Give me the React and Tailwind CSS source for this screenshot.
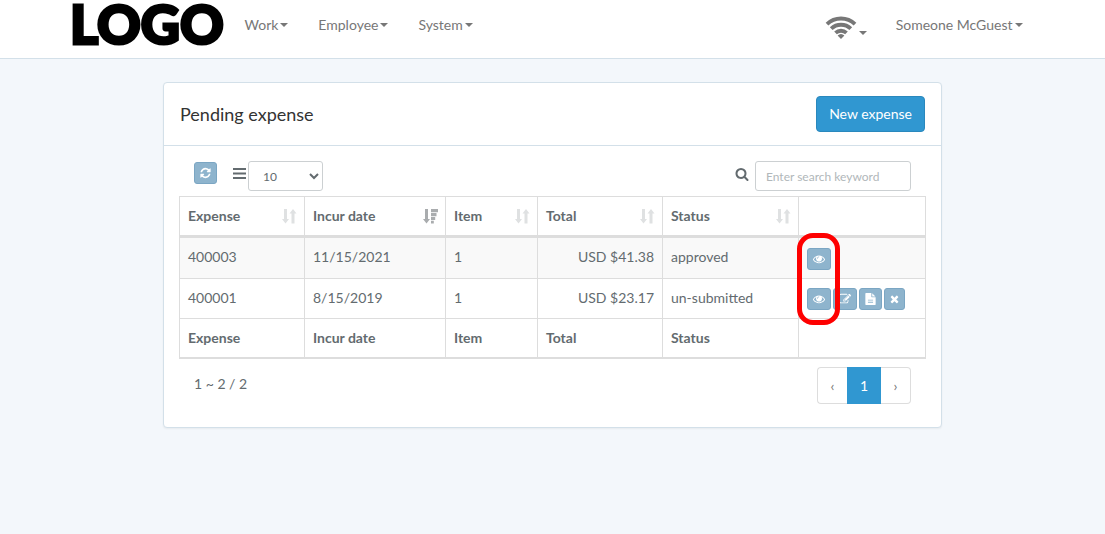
const ICONS = {
    eye: {
        box: '0 0 1792 1792',
        path: 'M1664 960q-152-236-381-353 61 104 61 225 0 185-131.5 316.5t-316.5 131.5-316.5-131.5-131.5-316.5q0-121 61-225-229 117-381 353 133 205 333.5 326.5t434.5 121.5 434.5-121.5 333.5-326.5zm-720-384q0-20-14-34t-34-14q-125 0-214.5 89.5t-89.5 214.5q0 20 14 34t34 14 34-14 14-34q0-86 61-147t147-61q20 0 34-14t14-34zm848 384q0 34-20 69-140 230-376.5 368.5t-499.5 138.5-499.5-139-376.5-368q-20-35-20-69t20-69q140-229 376.5-368t499.5-139 499.5 139 376.5 368q20 35 20 69z',
    },
    refresh: {
        box: '128 0 1536 1792',
        path: 'M1639 1056q0 5-1 7-64 268-268 434.5t-478 166.5q-146 0-282.5-55t-243.5-157l-129 129q-19 19-45 19t-45-19-19-45v-448q0-26 19-45t45-19h448q26 0 45 19t19 45-19 45l-137 137q71 66 161 102t187 36q134 0 250-65t186-179q11-17 53-117 8-23 30-23h192q13 0 22.5 9.5t9.5 22.5zm25-800v448q0 26-19 45t-45 19h-448q-26 0-45-19t-19-45 19-45l138-138q-148-137-349-137-134 0-250 65t-186 179q-11 17-53 117-8 23-30 23h-199q-13 0-22.5-9.5t-9.5-22.5v-7q65-268 270-434.5t480-166.5q146 0 284 55.5t245 156.5l130-129q19-19 45-19t45 19 19 45z',
    },
    search: {
        box: '0 0 1792 1792',
        path: 'M1216 832q0-185-131.5-316.5t-316.5-131.5-316.5 131.5-131.5 316.5 131.5 316.5 316.5 131.5 316.5-131.5 131.5-316.5zm512 832q0 52-38 90t-90 38q-54 0-90-38l-343-342q-179 124-399 124-143 0-273.5-55.5t-225-150-150-225-55.5-273.5 55.5-273.5 150-225 225-150 273.5-55.5 273.5 55.5 225 150 150 225 55.5 273.5q0 220-124 399l343 343q37 37 37 90z',
    },
    edit: {
        box: '0 0 1792 1792',
        path: 'M888 1184l116-116-152-152-116 116v56h96v96h56zm440-720q-16-16-33 1l-350 350q-17 17-1 33t33-1l350-350q17-17 1-33zm80 594v190q0 119-84.5 203.5t-203.5 84.5h-832q-119 0-203.5-84.5t-84.5-203.5v-832q0-119 84.5-203.5t203.5-84.5h832q63 0 117 25 15 7 18 23 3 17-9 29l-49 49q-14 14-32 8-23-6-45-6h-832q-66 0-113 47t-47 113v832q0 66 47 113t113 47h832q66 0 113-47t47-113v-126q0-13 9-22l64-64q15-15 35-7t20 29zm-96-738l288 288-672 672h-288v-288zm444 132l-92 92-288-288 92-92q28-28 68-28t68 28l152 152q28 28 28 68t-28 68z',
    },
    file: {
        box: '128 0 1536 1792',
        path: 'M1596 476q14 14 28 36h-472v-472q22 14 36 28zm-476 164h544v1056q0 40-28 68t-68 28h-1344q-40 0-68-28t-28-68v-1600q0-40 28-68t68-28h800v544q0 40 28 68t68 28zm160 800v-128h-768v128zm0-320v-128h-768v128z',
    },
    times: {
        box: '192 0 1408 1792',
        path: 'M1490 1322q0 40-28 68l-136 136q-28 28-68 28t-68-28l-294-294-294 294q-28 28-68 28t-68-28l-136-136q-28-28-28-68t28-68l294-294-294-294q-28-28-28-68t28-68l136-136q28-28 68-28t68 28l294 294 294-294q28-28 68-28t68 28l136 136q28 28 28 68t-28 68l-294 294 294 294q28 28 28 68z',
    },
};

const Icon = ({ name, className }) => (
    <svg viewBox={ICONS[name].box} fill="currentColor" fillRule="evenodd" className={className}>
        <path d={ICONS[name].path} />
    </svg>
);

const WifiIcon = () => (
    <svg viewBox="0 0 32 24" fill="none" stroke="currentColor" strokeWidth="3.9" className="h-6 w-8">
        <path d="M2 9.200a20.200 20.200 0 0 1 28 0" />
        <path d="M6.200 13.600a14.200 14.200 0 0 1 19.600 0" />
        <path d="M10.500 17.900a8.200 8.200 0 0 1 11 0" />
        <path d="M12.600 20.500a5 5 0 0 1 6.800 0L16 24z" fill="currentColor" stroke="none" />
    </svg>
);

const SortIcon = ({ active }) =>
    active ? (
        <svg viewBox="0 0 15 15" fill="currentColor" className="size-[15px] text-[#a9acae]">
            <path d="M2 0h3v10h2l-3.500 4.500L0 10h2zM8 0h7v3.200H8zM8 4h5.500v3.200H8zM8 8h4.200v3H8zM8 11.800h2.800v2.700H8z" />
        </svg>
    ) : (
        <svg viewBox="0 0 15 15" fill="currentColor" className="size-[15px] text-[#dfe1e2]">
            <path d="M2 0h3v10h2l-3.500 4.500L0 10h2zM9.500 14.500h3v-10h2L11 0 7.500 4.500h2z" />
        </svg>
    );

const Caret = () => (
    <span className="inline-block border-x-4 border-t-4 border-x-transparent border-t-current" />
);

const NavItem = ({ children }) => (
    <a href="#" className="flex items-center gap-0.5 px-[15px] text-[#777]">
        {children}
        <Caret />
    </a>
);

const IconButton = ({ icon, label, iconClass = 'h-3 w-3' }) => (
    <button
        type="button"
        aria-label={label}
        className="flex h-[22px] items-center justify-center rounded-[3px] border border-[#7ba6c3] bg-[#8eb4cd] px-[5px] text-white"
    >
        <Icon name={icon} className={iconClass} />
    </button>
);

const columns = [
    { title: 'Expense', width: 'w-[125px]' },
    { title: 'Incur date', width: 'w-[141px]', sorted: true },
    { title: 'Item', width: 'w-[92px]' },
    { title: 'Total', width: 'w-[125px]' },
    { title: 'Status', width: 'w-[136px]' },
];

const expenses = [
    { id: '400003', date: '11/15/2021', items: 1, total: 'USD $41.38', status: 'approved' },
    {
        id: '400001',
        date: '8/15/2019',
        items: 1,
        total: 'USD $23.17',
        status: 'un-submitted',
        editable: true,
    },
];

const Logo = () => (
    <svg viewBox="0 0 160 50" className="h-[50px] w-40 overflow-visible">
        <text
            x="2"
            y="44"
            fill="#000"
            stroke="#000"
            strokeWidth="3"
            className="text-[54px] font-black"
        >
            LOGO
        </text>
    </svg>
);

const Navbar = () => (
    <nav className="border-b border-[#d3e0e9] bg-white">
        <div className="mx-auto flex h-[58px] max-w-[970px] justify-between">
            <div className="flex">
                <a href="#" className="w-[162px]">
                    <Logo />
                </a>
                <div className="flex h-[50px]">
                    <NavItem>Work</NavItem>
                    <NavItem>Employee</NavItem>
                    <NavItem>System</NavItem>
                </div>
            </div>
            <div className="flex h-[50px]">
                <a
                    href="#"
                    aria-label="Connection"
                    className="flex items-center gap-0.5 px-3.5 pt-1 text-[#777]"
                >
                    <WifiIcon />
                    <span className="flex pt-3">
                        <Caret />
                    </span>
                </a>
                <NavItem>Someone McGuest</NavItem>
            </div>
        </div>
    </nav>
);

const Toolbar = () => (
    <div className="flex items-start justify-between px-[15px] pb-[5px]">
        <div className="flex items-start">
            <div className="pt-px">
                <IconButton icon="refresh" label="Refresh" iconClass="h-3 w-[11px]" />
            </div>
            <label htmlFor="page-size" aria-label="Rows per page" className="pt-[7px] pr-0.5 pl-4">
                <svg viewBox="0 0 13 11" fill="currentColor" className="h-[11px] w-[13px]">
                    <path d="M0 0h13v2H0zM0 4.500h13v2H0zM0 9h13v2H0z" />
                </svg>
            </label>
            <select
                id="page-size"
                defaultValue="10"
                className="h-[30px] w-[75px] rounded-[3px] border border-[#ccd0d2] bg-white px-2.5 text-xs"
            >
                <option>10</option>
                <option>25</option>
                <option>50</option>
            </select>
        </div>
        <div className="flex items-start gap-1.5">
            <label htmlFor="search" aria-label="Search" className="pt-1.5">
                <Icon name="search" className="size-3.5" />
            </label>
            <input
                id="search"
                type="text"
                placeholder="Enter search keyword"
                className="h-[30px] w-[156px] rounded-[3px] border border-[#ccd0d2] px-2.5 text-xs placeholder:text-[#b1b7ba]"
            />
        </div>
    </div>
);

const ExpenseTable = () => (
    <table className="w-full table-fixed border-collapse border border-[#ddd] leading-[22px]">
        <thead>
            <tr className="border-b-3 border-[#ddd]">
                {columns.map((column) => (
                    <th
                        key={column.title}
                        className={`${column.width} border-x border-[#ddd] py-2 pr-[7px] pl-2 text-left font-bold`}
                    >
                        <div className="flex items-center justify-between">
                            {column.title}
                            <SortIcon active={column.sorted} />
                        </div>
                    </th>
                ))}
                <th className="border-x border-[#ddd]" />
            </tr>
        </thead>
        <tbody>
            {expenses.map((expense, index) => (
                <tr key={expense.id} className="group align-top odd:bg-[#f9f9f9]">
                    <td className="border border-[#ddd] p-2">{expense.id}</td>
                    <td className="border border-[#ddd] p-2">{expense.date}</td>
                    <td className="border border-[#ddd] p-2">{expense.items}</td>
                    <td className="border border-[#ddd] p-2 text-right">{expense.total}</td>
                    <td className="border border-[#ddd] p-2">{expense.status}</td>
                    <td className="border border-[#ddd] px-2 pt-[9px] pb-2 group-first:pt-2.5">
                        <div className="relative flex gap-0.5">
                            <IconButton icon="eye" label="View" />
                            {expense.editable && (
                                <>
                                    <IconButton icon="edit" label="Edit" />
                                    <IconButton
                                        icon="file"
                                        label="Submit"
                                        iconClass="h-3 w-[11px]"
                                    />
                                    <IconButton
                                        icon="times"
                                        label="Delete"
                                        iconClass="h-3 w-[9px]"
                                    />
                                </>
                            )}
                            {/* highlight around the view buttons */}
                            {index === 0 && (
                                <div className="pointer-events-none absolute -top-[15px] -left-2.5 z-10 h-[92px] w-[43px] rounded-2xl border-5 border-[#fe0000]" />
                            )}
                        </div>
                    </td>
                </tr>
            ))}
        </tbody>
        <tfoot>
            <tr className="border-b-2 border-[#ddd]">
                {columns.map((column) => (
                    <th
                        key={column.title}
                        className="border-x border-[#ddd] p-2 text-left font-bold"
                    >
                        {column.title}
                    </th>
                ))}
                <th className="border-x border-[#ddd]" />
            </tr>
        </tfoot>
    </table>
);

const Pagination = () => (
    <div className="flex items-start justify-between px-[15px] pt-2">
        <p className="pt-1.5 leading-[22px]">1 ~ 2 / 2</p>
        <div className="flex h-[37px] text-[#777]">
            <button
                type="button"
                aria-label="Previous page"
                className="w-[30px] rounded-l border border-r-0 border-[#ddd]"
            >
                ‹
            </button>
            <button type="button" className="w-[34px] bg-[#3097d1] text-white">
                1
            </button>
            <button
                type="button"
                aria-label="Next page"
                className="w-[30px] rounded-r border border-l-0 border-[#ddd]"
            >
                ›
            </button>
        </div>
    </div>
);

const App = () => {
    return (
        <div className="min-h-screen bg-[#f3f7fb] font-['Lato',sans-serif] text-sm text-[#636b6f]">
            <Navbar />
            <main className="mx-auto mt-[23px] max-w-[779px] rounded border border-[#d3e0e9] bg-white shadow-xs">
                <header className="flex items-center justify-between border-b border-[#d3e0e9] px-4 py-[13px]">
                    <h1 className="text-lg leading-7 text-[#333]">Pending expense</h1>
                    <button
                        type="button"
                        className="h-9 rounded border border-[#2a88bd] bg-[#3097d1] px-3 text-white"
                    >
                        New expense
                    </button>
                </header>
                <div className="px-[15px] pt-[15px] pb-[23px]">
                    <Toolbar />
                    <ExpenseTable />
                    <Pagination />
                </div>
            </main>
        </div>
    );
};

export default App;
